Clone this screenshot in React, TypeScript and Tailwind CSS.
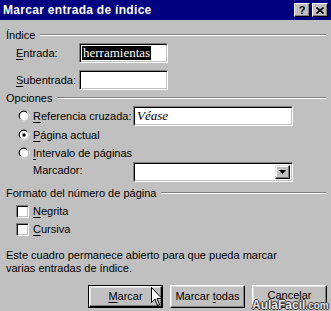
import React from "react";

const sunken =
  "border border-t-[#808080] border-l-[#808080] border-r-white border-b-white shadow-[inset_1px_1px_0_#000,inset_-1px_-1px_0_#c0c0c0] bg-white";

function U({ children }: { children: React.ReactNode }) {
  return <span className="underline underline-offset-[2px] decoration-1">{children}</span>;
}

function GroupHeader({ label }: { label: string }) {
  return (
    <div className="flex items-center h-[14px] pr-[5px]">
      <span className="leading-[14px] whitespace-nowrap">{label}</span>
      <div className="flex-1 ml-[5px] h-[2px] border-t border-t-[#808080] border-b border-b-white" />
    </div>
  );
}

function Radio({ checked }: { checked?: boolean }) {
  return (
    <svg width="12" height="12" viewBox="0 0 12 12" className="shrink-0">
      <path d="M8 1.2 A5.5 5.5 0 0 0 1.2 8" stroke="#808080" strokeWidth="1" fill="none" />
      <path d="M9 2.5 A4.5 4.5 0 0 0 2.5 9" stroke="#000" strokeWidth="1" fill="none" />
      <circle cx="6" cy="6" r="4" fill="#fff" />
      <path d="M10.8 4 A5.5 5.5 0 0 1 4 10.8" stroke="#fff" strokeWidth="1" fill="none" />
      <path d="M9.5 3 A4.5 4.5 0 0 1 3 9.5" stroke="#c0c0c0" strokeWidth="1" fill="none" />
      {checked && <circle cx="6" cy="6" r="1.7" fill="#000" />}
    </svg>
  );
}

function Checkbox() {
  return <div className={`w-[13px] h-[13px] shrink-0 ${sunken}`} />;
}

function Button({
  children,
  def,
  className = "",
}: {
  children: React.ReactNode;
  def?: boolean;
  className?: string;
}) {
  return (
    <div
      className={`h-[23px] w-[75px] flex ${def ? "border border-black" : ""} ${className}`}
    >
      <div className="flex-1 flex items-center justify-center border border-t-white border-l-white border-r-black border-b-black shadow-[inset_-1px_-1px_0_#808080,inset_1px_1px_0_#dfdfdf]">
        {children}
      </div>
    </div>
  );
}

export default function App() {
  return (
    <div className="relative w-[331px] h-[311px] overflow-hidden bg-[#c0c0c0] text-[11px] text-black font-['Liberation_Sans',Arial,sans-serif]">
      {/* Title bar */}
      <div className="h-[20px] bg-[#000080] flex items-center pl-[3px] pr-[3px]">
        <span className="text-white font-bold text-[12px] leading-none tracking-[0.3px]">
          Marcar entrada de índice
        </span>
        <div className="ml-auto flex gap-[2px]">
          <div className="w-[16px] h-[14px] bg-[#c0c0c0] border border-t-white border-l-white border-r-black border-b-black shadow-[inset_-1px_-1px_0_#808080] flex items-center justify-center text-[11px] font-bold leading-none">
            ?
          </div>
          <div className="w-[16px] h-[14px] bg-[#c0c0c0] border border-t-white border-l-white border-r-black border-b-black shadow-[inset_-1px_-1px_0_#808080] flex items-center justify-center">
            <svg width="8" height="7" viewBox="0 0 8 7">
              <path d="M0.5 0.5 L7.5 6.5 M7.5 0.5 L0.5 6.5" stroke="#000" strokeWidth="1.6" />
            </svg>
          </div>
        </div>
      </div>

      <div className="pl-[6px]">
        {/* Índice */}
        <div className="mt-[8px]">
          <GroupHeader label="Índice" />
        </div>
        <div className="flex items-center mt-[1px] h-[20px] pl-[10px]">
          <span className="w-[63px]">
            <U>E</U>ntrada:
          </span>
          <div className={`w-[89px] h-[20px] ${sunken} flex items-center pl-[2px]`}>
            <span className="bg-black text-white font-['Liberation_Serif',serif] text-[13px] leading-[14px] px-[1px]">
              herramientas
            </span>
          </div>
        </div>
        <div className="flex items-center mt-[7px] h-[20px] pl-[10px]">
          <span className="w-[63px]">
            <U>S</U>ubentrada:
          </span>
          <div className={`w-[89px] h-[20px] ${sunken}`} />
        </div>

        {/* Opciones */}
        <div className="mt-[1px]">
          <GroupHeader label="Opciones" />
        </div>
        <div className="flex items-center mt-[1px] h-[20px] pl-[12px]">
          <Radio />
          <span className="ml-[3px] w-[100px] whitespace-nowrap">
            <U>R</U>eferencia cruzada:
          </span>
          <div className={`w-[160px] h-[20px] ${sunken} flex items-center pl-[3px]`}>
            <span className="italic font-['Liberation_Serif',serif] text-[13px]">Véase</span>
          </div>
        </div>
        <div className="flex items-center h-[18px] pl-[12px]">
          <Radio checked />
          <span className="ml-[3px]">
            <U>P</U>ágina actual
          </span>
        </div>
        <div className="flex items-center h-[18px] pl-[12px]">
          <Radio />
          <span className="ml-[3px]">
            <U>I</U>ntervalo de páginas
          </span>
        </div>
        <div className="flex items-center h-[20px] pl-[27px]">
          <span className="w-[100px] -mt-[3px]">Marcador:</span>
          <div className={`w-[160px] h-[20px] ${sunken} flex justify-end p-[2px]`}>
            <div className="w-[15px] h-full bg-[#c0c0c0] border border-t-[#dfdfdf] border-l-[#dfdfdf] border-r-black border-b-black shadow-[inset_-1px_-1px_0_#808080,inset_1px_1px_0_#fff] flex items-center justify-center">
              <svg width="7" height="4" viewBox="0 0 7 4">
                <path d="M0 0 H7 L3.5 4 Z" fill="#000" />
              </svg>
            </div>
          </div>
        </div>

        {/* Formato */}
        <div className="mt-[4px]">
          <GroupHeader label="Formato del número de página" />
        </div>
        <div className="flex items-center mt-[2px] h-[18px] pl-[10px]">
          <Checkbox />
          <span className="ml-[4px]">
            <U>N</U>egrita
          </span>
        </div>
        <div className="flex items-center h-[18px] pl-[10px]">
          <Checkbox />
          <span className="ml-[4px]">
            <U>C</U>ursiva
          </span>
        </div>

        <p className="mt-[11px] leading-[13px]">
          Este cuadro permanece abierto para que pueda marcar
          <br />
          varias entradas de índice.
        </p>

        <div className="flex mt-[10px] pl-[82px] gap-[7px]">
          <Button def>
            <span>
              <U>M</U>arcar
            </span>
          </Button>
          <Button>
            <span>
              Marcar <U>t</U>odas
            </span>
          </Button>
          <Button>
            <span className="-mt-[2px]">Cancelar</span>
          </Button>
        </div>
      </div>

      {/* Mouse cursor */}
      <svg
        className="absolute left-[151px] top-[287px]"
        width="12"
        height="20"
        viewBox="0 0 12 20"
      >
        <path
          d="M0.5 0.5 L0.5 15.5 L4 12 L6.5 18.5 L8.5 17.5 L6 11.5 L11 11.5 Z"
          fill="#fff"
          stroke="#000"
          strokeWidth="1"
          strokeLinejoin="miter"
        />
      </svg>

      {/* Watermark */}
      <div className="absolute left-[252px] top-[299px] flex items-baseline font-['Liberation_Sans',Arial,sans-serif] font-bold text-[#e8e8e8] [text-shadow:1px_0_0_#333,-1px_0_0_#333,0_1px_0_#333,0_-1px_0_#333]">
        <span className="text-[12px] leading-none">AulaFacil</span>
        <span className="text-[10px] leading-none">.com</span>
      </div>
    </div>
  );
}
